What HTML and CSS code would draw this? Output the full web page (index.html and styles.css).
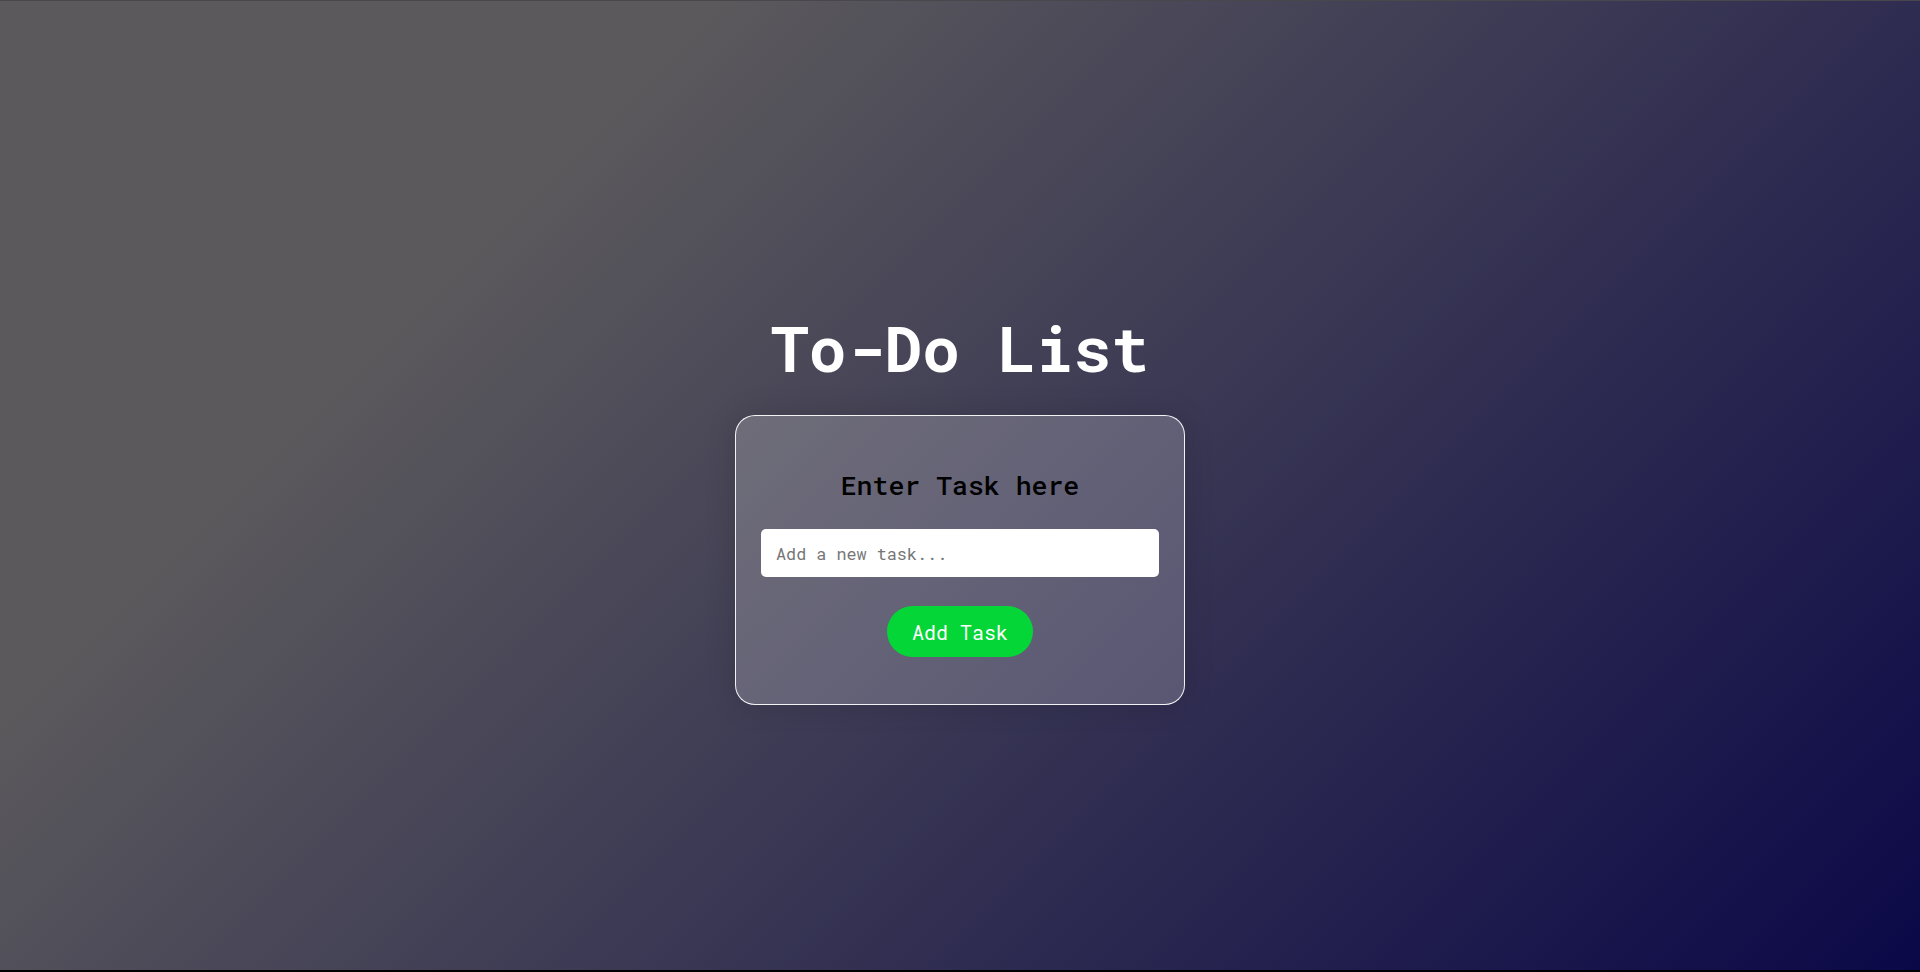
FILE: index.html
```html
<!DOCTYPE html>
<html lang="en">
<head>
<meta charset="UTF-8">
<title>To-Do List</title>
<link rel="stylesheet" href="styles.css">
</head>
<body>
  <main class="app">
    <h1 class="app-title">To-Do List</h1>
    <section class="card">
      <h2 class="card-title">Enter Task here</h2>
      <input class="task-input" type="text" placeholder="Add a new task...">
      <button class="add-btn" type="button">Add Task</button>
    </section>
  </main>
</body>
</html>
```

FILE: styles.css
```css
html {
  background: #000;
  margin: 0;
  padding: 0;
}

body {
  margin: 0;
  height: 969px;
  border-top: 1px solid #48474b;
  background: linear-gradient(135deg, #5b595c 25%, #0b0848 100%);
  font-family: "Roboto Mono", "DejaVu Sans Mono", "Liberation Mono", monospace;
  display: flex;
  align-items: center;
  justify-content: center;
}

.app {
  display: flex;
  flex-direction: column;
  align-items: center;
}

.app-title {
  margin: 40px 0 25px;
  font-size: 63px;
  line-height: 84px;
  font-weight: 700;
  color: #fff;
}

.card {
  box-sizing: border-box;
  width: 450px;
  height: 290px;
  padding: 52px 25px 0;
  border: 1px solid rgba(255, 255, 255, 0.92);
  border-radius: 20px;
  background: rgba(255, 255, 255, 0.2);
  box-shadow: 0 0 30px rgba(0, 0, 0, 0.15);
  display: flex;
  flex-direction: column;
  align-items: center;
}

.card-title {
  margin: 0 0 27px;
  font-size: 26.5px;
  line-height: 34px;
  font-weight: 500;
  color: #000;
}

.task-input {
  box-sizing: border-box;
  width: 100%;
  height: 48px;
  padding: 0 15px;
  border: none;
  border-radius: 5px;
  background: #fff;
  font-family: inherit;
  font-size: 16.8px;
  color: #222;
  outline: none;
}

.task-input::placeholder {
  color: #767676;
}

.add-btn {
  margin-top: 29px;
  height: 51px;
  padding: 0 25px;
  border: none;
  border-radius: 26px;
  background: #05d637;
  color: #fff;
  font-family: inherit;
  font-size: 20px;
  cursor: pointer;
}
```
